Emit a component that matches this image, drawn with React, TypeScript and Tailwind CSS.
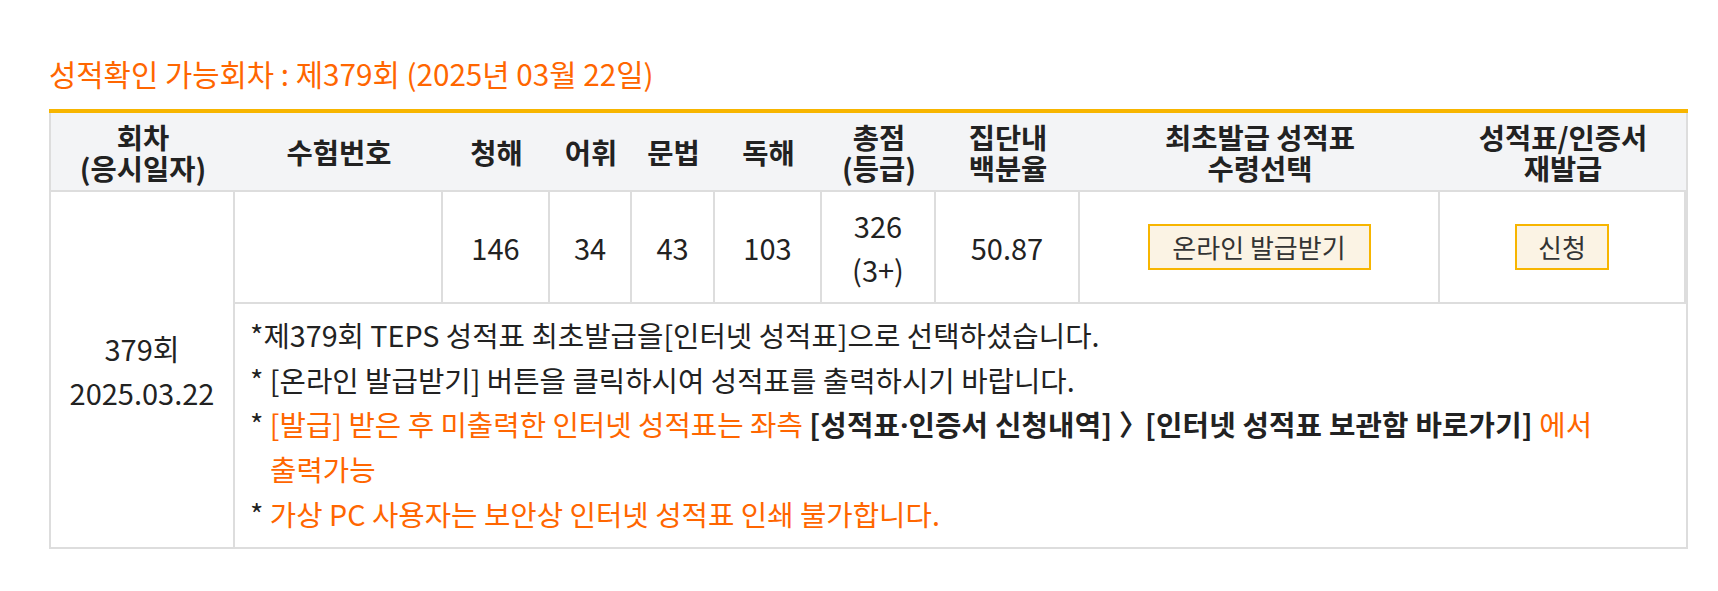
import React from "react";

const font = { fontFamily: '"Noto Sans CJK KR", "Noto Sans", sans-serif' };

function Btn({ children, className }: { children: React.ReactNode; className: string }) {
  return (
    <button
      className={
        "h-[46px] border-2 border-[#f7b500] bg-[#fbf3e4] text-[26px] leading-none text-[#333] " +
        className
      }
    >
      {children}
    </button>
  );
}

export default function App() {
  const head =
    "flex items-center justify-center bg-[#f3f4f6] border-b-2 border-[#dddddd] text-center text-[28.5px] font-bold leading-[31px] text-[#222]";
  const cell =
    "flex items-center justify-center border-r-2 border-b-2 border-[#dddddd] text-center text-[29px] leading-[44px] text-[#222]";
  return (
    <div className="min-h-[591px] bg-white pl-[49px] pt-[54px]" style={font}>
      <h2 className="mb-[15px] text-[29.7px] font-normal leading-[40px] text-[#ff6600]">
        성적확인 가능회차 : 제379회 (2025년 03월 22일)
      </h2>
      <div className="w-[1639px] border-t-4 border-[#f7b500]">
        <div className="grid grid-cols-[184px_208px_107px_82px_83px_107px_114px_144px_360px_246px] grid-rows-[79px_112px_245px] border-x-2 border-[#dddddd]">
          <div className={head}>회차<br />(응시일자)</div>
          <div className={head}>수험번호</div>
          <div className={head}>청해</div>
          <div className={head}>어휘</div>
          <div className={head}>문법</div>
          <div className={head}>독해</div>
          <div className={head}>총점<br />(등급)</div>
          <div className={head}>집단내<br />백분율</div>
          <div className={head}>최초발급 성적표<br />수령선택</div>
          <div className={head}>성적표/인증서<br />재발급</div>

          <div className={cell + " row-span-2"}>379회<br />2025.03.22</div>
          <div className={cell}></div>
          <div className={cell}>146</div>
          <div className={cell}>34</div>
          <div className={cell}>43</div>
          <div className={cell}>103</div>
          <div className={cell}>326<br />(3+)</div>
          <div className={cell}>50.87</div>
          <div className={cell}>
            <Btn className="w-[223px]">온라인 발급받기</Btn>
          </div>
          <div className={cell + " border-r-0"}>
            <Btn className="w-[94px]">신청</Btn>
          </div>

          <div className="col-span-9 whitespace-nowrap border-b-2 border-[#dddddd] pl-[15px] pt-[8px] text-[28.7px] leading-[45px] text-[#222]">
            <p>*제379회 TEPS 성적표 최초발급을[인터넷 성적표]으로 선택하셨습니다.</p>
            <p>* [온라인 발급받기] 버튼을 클릭하시여 성적표를 출력하시기 바랍니다.</p>
            <p className="pl-[20px] -indent-[20px] leading-[44px]">
              *{" "}
              <span className="text-[#ff6600]">[발급] 받은 후 미출력한 인터넷 성적표는 좌측 </span>
              <span className="font-bold tracking-[0.2px]">
                [성적표<span style={{ fontFamily: '"Noto Sans", sans-serif' }}>·</span>인증서 신청내역]{" "}
                <span className="-mr-[3px]">〉</span>[인터넷 성적표 보관함 바로가기]
              </span>
              <span className="text-[#ff6600]"> 에서</span>
              <br />
              <span className="text-[#ff6600]">출력가능</span>
            </p>
            <p>
              * <span className="text-[#ff6600]">가상 PC 사용자는 보안상 인터넷 성적표 인쇄 불가합니다.</span>
            </p>
          </div>
        </div>
      </div>
    </div>
  );
}
